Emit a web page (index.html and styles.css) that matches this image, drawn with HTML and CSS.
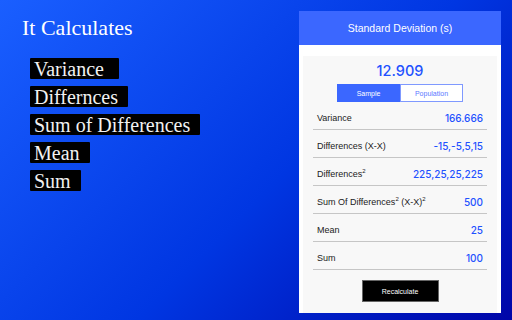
FILE: index.html
```html
<!DOCTYPE html>
<html lang="en">
<head>
  <meta charset="UTF-8">
  <meta name="viewport" content="width=device-width, initial-scale=1.0">
  <title>It Calculates</title>
  <link rel="stylesheet" href="styles.css">
</head>
<body>

  <div class="page">
    <div class="intro">
      <h1>It Calculates</h1>
      <div class="features">
        <span class="tag">Variance&nbsp;</span>
        <span class="tag">Differnces</span>
        <span class="tag">Sum of Differences</span>
        <span class="tag">Mean</span>
        <span class="tag">Sum</span>
      </div>
    </div>

    <div class="panel">
      <div class="panel-head">Standard Deviation (s)</div>
      <div class="panel-body">
        <div class="result">12.909</div>
        <div class="toggle">
          <span class="seg active">Sample</span>
          <span class="seg">Population</span>
        </div>
        <ul class="rows">
          <li class="row"><span class="label">Variance</span><span class="value">166.666</span></li>
          <li class="row"><span class="label">Differences (X-X)</span><span class="value">-15,-5,5,15</span></li>
          <li class="row"><span class="label">Differences<sup>2</sup></span><span class="value">225,25,25,225</span></li>
          <li class="row"><span class="label">Sum Of Differences<sup>2</sup> (X-X)<sup>2</sup></span><span class="value">500</span></li>
          <li class="row"><span class="label">Mean</span><span class="value">25</span></li>
          <li class="row"><span class="label">Sum</span><span class="value">100</span></li>
        </ul>
        <button class="recalc">Recalculate</button>
      </div>
    </div>
  </div>

</body>
</html>
```

FILE: styles.css
```css
body {
  margin: 0;
  width: 512px;
  height: 320px;
  overflow: hidden;
  background: linear-gradient(135deg, #1a5fff 0%, #0036e2 55%, #0006a8 100%);
  color: #fff;
  font-family: 'Liberation Sans', Arial, sans-serif;
}

.page {
  display: flex;
  justify-content: space-between;
  height: 320px;
}

/* Colonne de gauche */
.intro {
  padding: 15px 0 0 22px;
}

h1 {
  margin: 0;
  font-family: 'Liberation Serif', 'Times New Roman', serif;
  font-weight: normal;
  font-size: 22px;
  line-height: 26px;
}

.features {
  display: flex;
  flex-direction: column;
  align-items: flex-start;
  gap: 7px;
  margin: 17px 0 0 8px;
}

.tag {
  background-color: #000;
  color: #f2f2f2;
  font-family: 'Liberation Serif', 'Times New Roman', serif;
  font-size: 20px;
  line-height: 20px;
  padding: 1px 10px 0 4px;
  border-radius: 1px;
}

/* Carte de calcul */
.panel {
  width: 202px;
  height: 302px;
  margin: 11px 11px 0 0;
  background-color: #fff;
  display: flex;
  flex-direction: column;
}

.panel-head {
  height: 34px;
  line-height: 34px;
  background-color: #3b67ff;
  text-align: center;
  font-size: 10.5px;
}

.panel-body {
  flex: 1;
  margin: 11px 4px 0;
  padding-top: 5px;
  background-color: #f8f8f8;
  color: #222;
}

.result {
  text-align: center;
  font-family: Inter, 'Liberation Sans', sans-serif;
  font-weight: 500;
  font-size: 14.5px;
  line-height: 20px;
  color: #1f52ff;
}

.toggle {
  display: flex;
  width: 126px;
  height: 18px;
  margin: 3px auto 0;
}

.seg {
  flex: 1;
  display: flex;
  justify-content: center;
  align-items: center;
  font-size: 7px;
  background-color: #fff;
  color: #5b78ff;
  border: 1px solid #7f99ff;
}

.seg.active {
  background-color: #3b67ff;
  border-color: #3b67ff;
  color: #fff;
}

.rows {
  list-style: none;
  margin: 0 10px;
  padding: 0;
}

.row {
  display: flex;
  justify-content: space-between;
  align-items: center;
  height: 28px;
  padding: 4px 4px 0;
  box-sizing: border-box;
  border-bottom: 1px solid #c6c6c6;
}

.label {
  font-size: 9px;
}

.label sup {
  font-size: 6px;
  line-height: 0;
}

.value {
  font-family: Inter, 'Liberation Sans', sans-serif;
  font-weight: 500;
  font-size: 10px;
  color: #1f52ff;
}

.recalc {
  display: block;
  width: 77px;
  height: 22px;
  margin: 10px auto 0;
  padding: 0;
  background-color: #000;
  color: #fff;
  border: 1px solid #666;
  font-family: 'Liberation Sans', Arial, sans-serif;
  font-size: 7px;
  cursor: pointer;
}
```
